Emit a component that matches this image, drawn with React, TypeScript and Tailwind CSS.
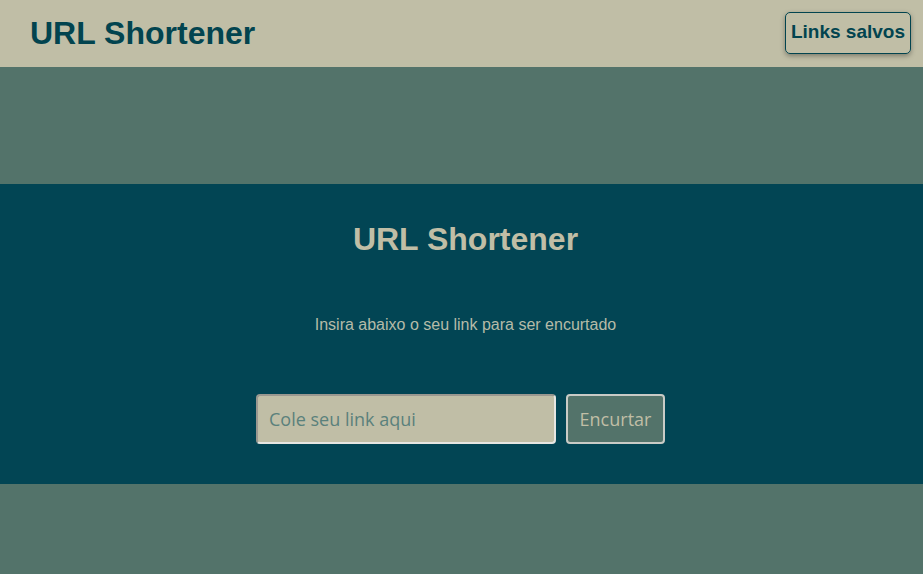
export default function App() {
  return (
    <div className="min-h-[574px] bg-[#53736a] font-['Liberation_Sans',Arial,sans-serif]">
      <header className="h-[67px] bg-[#c0bea6] flex items-center justify-between pl-[30px] pr-3">
        <h1 className="text-[32px] font-bold text-[#02444f] leading-none -mt-[2px]">URL Shortener</h1>
        <button className="h-[42px] px-[5px] -mt-[2px] rounded-[5px] border border-[#02444f] text-[#02444f] text-[19px] font-bold shadow-[0_2px_5px_rgba(0,0,0,0.35)]">
          Links salvos
        </button>
      </header>
      <div className="h-[117px]" />
      <main className="h-[300px] bg-[#024554] flex flex-col items-center">
        <h2 className="mt-[37px] ml-[8px] text-[32px] font-bold text-[#c0bea6] leading-[36px]">URL Shortener</h2>
        <p className="mt-[58px] ml-[8px] text-[16px] text-[#b5bba8] leading-[20px]">
          Insira abaixo o seu link para ser encurtado
        </p>
        <form className="mt-[59px] flex gap-[10px] -ml-[2px]" onSubmit={(e) => e.preventDefault()}>
          <input
            placeholder="Cole seu link aqui"
            className="w-[300px] h-[50px] px-[11px] rounded-[4px] bg-[#c0bea6] border-2 border-t-[#9a9890] border-l-[#9a9890] border-r-[#e6e6e2] border-b-[#e6e6e2] text-[18px] text-[#3f6a68] placeholder:text-[#5a817c] font-['Open_Sans','DejaVu_Sans',sans-serif] outline-none"
          />
          <button className="w-[99px] h-[50px] rounded-[4px] bg-[#53736a] border-2 border-[#c9cbc6] text-[18px] text-[#c0bea6] font-['Open_Sans','DejaVu_Sans',sans-serif]">
            Encurtar
          </button>
        </form>
      </main>
    </div>
  );
}
